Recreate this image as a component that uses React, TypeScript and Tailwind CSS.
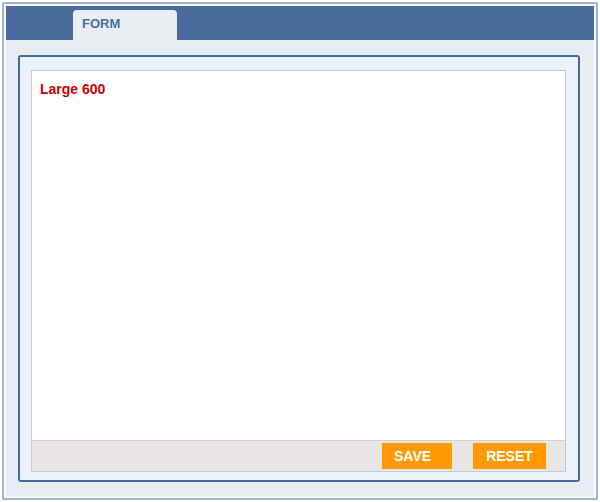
export default function App() {
  return (
    <div className="w-[600px] h-[502px] bg-white p-[2px] font-['Liberation_Sans',Arial,sans-serif]">
      <div className="h-full border-2 border-[#a3b5cd] bg-[#f4f6f9] p-[2px] flex flex-col">
        {/* Header with tab */}
        <div className="h-[34px] bg-[#4a6b9c] flex items-end pl-[67px]">
          <div className="w-[104px] h-[30px] bg-[#e8edf2] rounded-t-[4px] pl-[9px] pt-[5px] leading-[16px]">
            <span className="text-[13px] font-bold text-[#4d6c9e]">FORM</span>
          </div>
        </div>

        {/* Body */}
        <div className="flex-1 bg-[#e8edf2] pt-[15px] pl-[12px] pr-[14px] pb-[14px] flex">
          <div className="flex-1 border-2 border-[#4a6a9f] rounded-[3px] bg-[#eaf2fc] pt-[13px] pl-[11px] pr-[12px] pb-[8px] flex">
            <div className="flex-1 bg-white border border-[#c3cad3] flex flex-col">
              <div className="flex-1 px-[8px] pt-[9px] leading-[18px]">
                <span className="text-[14px] font-bold text-[#cc0000]">Large 600</span>
              </div>
              <div className="h-[31px] bg-[#e9e5e5] border-t border-[#d2d2d2] flex items-center justify-end gap-[21px] pr-[19px]">
                <button className="w-[70px] h-[26px] bg-[#ff9900] text-white text-[14px] font-bold text-left pl-[12px]">SAVE</button>
                <button className="w-[73px] h-[26px] bg-[#ff9900] text-white text-[14px] font-bold">RESET</button>
              </div>
            </div>
          </div>
        </div>
      </div>
    </div>
  );
}
